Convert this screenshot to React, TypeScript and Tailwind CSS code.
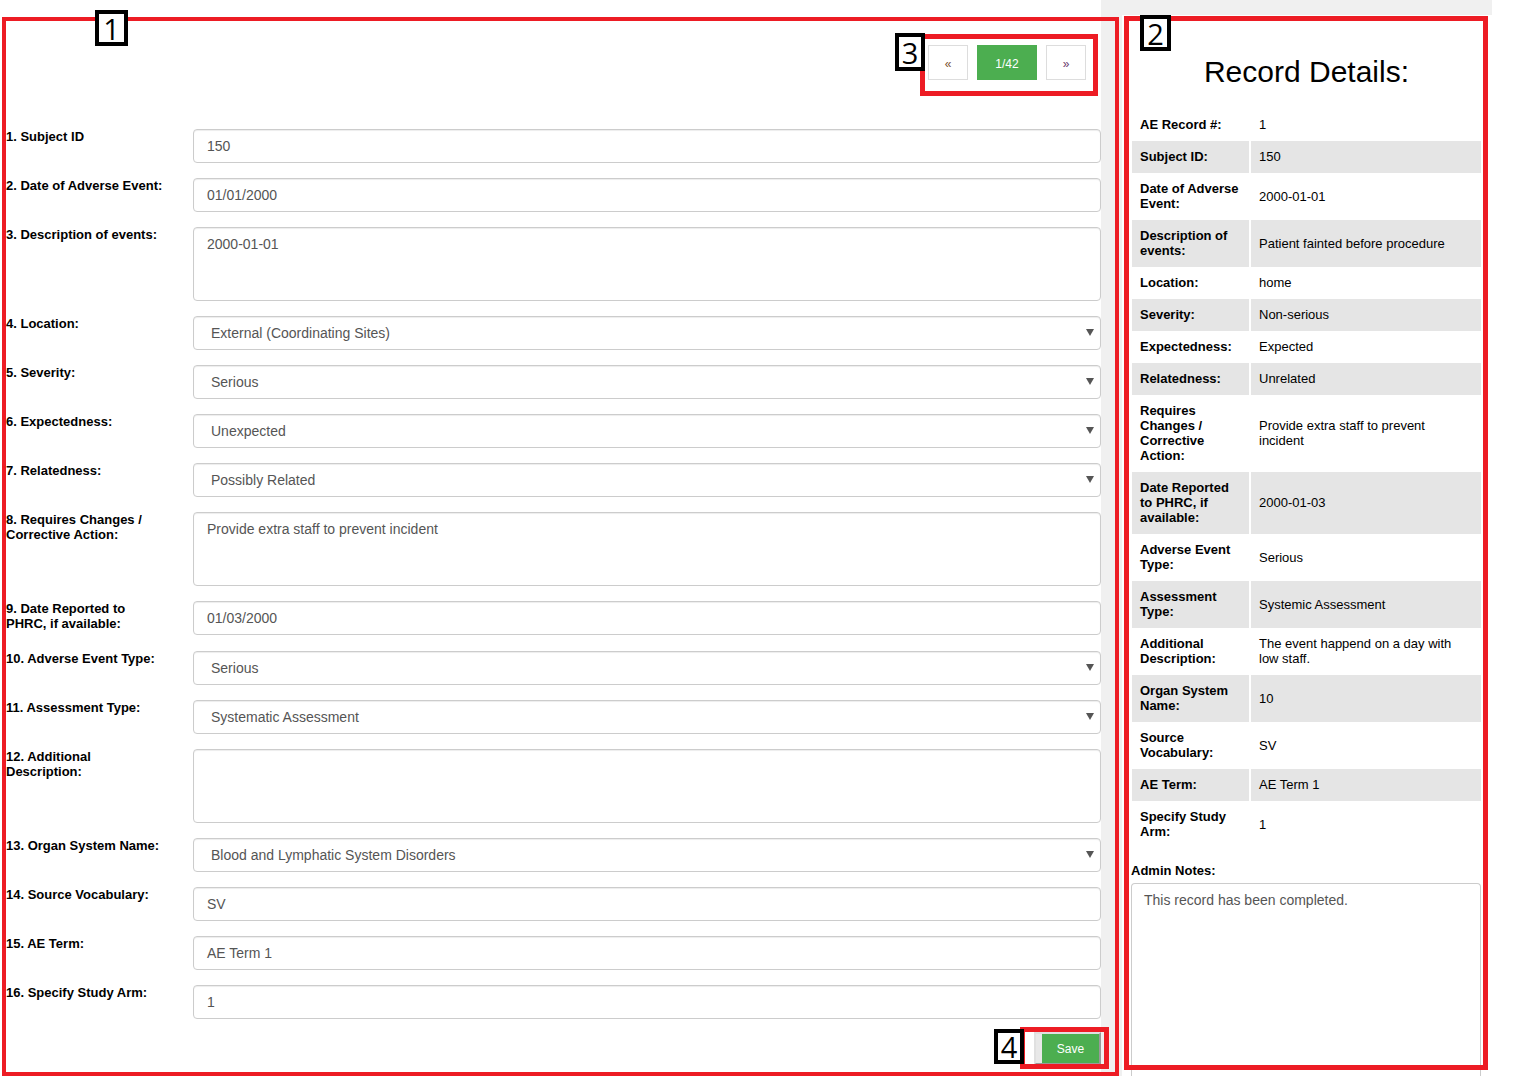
import React from "react";

type Row = { label: string; type: "input" | "select" | "textarea"; value: string };

const formRows: Row[] = [
  { label: "1. Subject ID", type: "input", value: "150" },
  { label: "2. Date of Adverse Event:", type: "input", value: "01/01/2000" },
  { label: "3. Description of events:", type: "textarea", value: "2000-01-01" },
  { label: "4. Location:", type: "select", value: "External (Coordinating Sites)" },
  { label: "5. Severity:", type: "select", value: "Serious" },
  { label: "6. Expectedness:", type: "select", value: "Unexpected" },
  { label: "7. Relatedness:", type: "select", value: "Possibly Related" },
  { label: "8. Requires Changes / Corrective Action:", type: "textarea", value: "Provide extra staff to prevent incident" },
  { label: "9. Date Reported to PHRC, if available:", type: "input", value: "01/03/2000" },
  { label: "10. Adverse Event Type:", type: "select", value: "Serious" },
  { label: "11. Assessment Type:", type: "select", value: "Systematic Assessment" },
  { label: "12. Additional Description:", type: "textarea", value: "" },
  { label: "13. Organ System Name:", type: "select", value: "Blood and Lymphatic System Disorders" },
  { label: "14. Source Vocabulary:", type: "input", value: "SV" },
  { label: "15. AE Term:", type: "input", value: "AE Term 1" },
  { label: "16. Specify Study Arm:", type: "input", value: "1" },
];

const details: { label: React.ReactNode; value: React.ReactNode }[] = [
  { label: "AE Record #:", value: "1" },
  { label: "Subject ID:", value: "150" },
  { label: "Date of Adverse Event:", value: "2000-01-01" },
  { label: "Description of events:", value: "Patient fainted before procedure" },
  { label: "Location:", value: "home" },
  { label: "Severity:", value: "Non-serious" },
  { label: "Expectedness:", value: "Expected" },
  { label: "Relatedness:", value: "Unrelated" },
  {
    label: (
      <>
        Requires
        <br />
        Changes /
        <br />
        Corrective
        <br />
        Action:
      </>
    ),
    value: (
      <>
        Provide extra staff to prevent
        <br />
        incident
      </>
    ),
  },
  {
    label: (
      <>
        Date Reported
        <br />
        to PHRC, if
        <br />
        available:
      </>
    ),
    value: "2000-01-03",
  },
  { label: "Adverse Event Type:", value: "Serious" },
  { label: "Assessment Type:", value: "Systemic Assessment" },
  {
    label: "Additional Description:",
    value: (
      <>
        The event happend on a day with
        <br />
        low staff.
      </>
    ),
  },
  { label: "Organ System Name:", value: "10" },
  { label: "Source Vocabulary:", value: "SV" },
  { label: "AE Term:", value: "AE Term 1" },
  { label: "Specify Study Arm:", value: "1" },
];

function Field({ row }: { row: Row }) {
  if (row.type === "textarea") {
    return (
      <div className="h-[74px] rounded-[4px] border border-[#cccccc] bg-white pl-[13px] pr-3 pt-[6px] text-[14px] leading-[20px] text-[#555555] shadow-[inset_0_1px_1px_rgba(0,0,0,0.075)]">
        {row.value}
      </div>
    );
  }
  if (row.type === "select") {
    return (
      <div className="flex h-[34px] items-center justify-between rounded-[4px] border border-[#cccccc] bg-white pl-[17px] pr-[6px] text-[14px] text-[#555555] shadow-[inset_0_1px_1px_rgba(0,0,0,0.075)]">
        <span>{row.value}</span>
        <svg width="8" height="7" viewBox="0 0 8 7" className="mt-[-2px]">
          <path d="M0 0 H8 L4 7 Z" fill="#555555" />
        </svg>
      </div>
    );
  }
  return (
    <div className="flex h-[34px] items-center rounded-[4px] border border-[#cccccc] bg-white pl-[13px] text-[14px] text-[#555555] shadow-[inset_0_1px_1px_rgba(0,0,0,0.075)]">
      {row.value}
    </div>
  );
}

function Tag({ n, className }: { n: string; className: string }) {
  return (
    <div
      className={`absolute flex items-center justify-center border-[4px] border-black bg-white text-[29px] leading-none text-black ${className}`}
      style={{ fontFamily: '"Open Sans", "Liberation Sans", sans-serif' }}
    >
      {n}
    </div>
  );
}

export default function App() {
  return (
    <div
      className="relative flex min-h-[1076px] w-[1536px] bg-white text-black"
      style={{ fontFamily: '"Liberation Sans", Arial, Helvetica, sans-serif' }}
    >
      {/* Left form column */}
      <div className="w-[1101px] shrink-0 bg-white">
        <div className="flex justify-end gap-[9px] pr-[15px] pt-[45px]">
          <div className="flex h-[35px] w-[40px] items-center justify-center border border-[#dddddd] bg-white pt-[2px] text-[12px] text-[#7a5230]">
            «
          </div>
          <div className="flex h-[35px] w-[60px] items-center justify-center bg-[#4cae50] pt-[2px] text-[12px] text-white">
            1/42
          </div>
          <div className="flex h-[35px] w-[40px] items-center justify-center border border-[#dddddd] bg-white pt-[2px] text-[12px] text-[#6b3a6b]">
            »
          </div>
        </div>

        <div className="mt-[49px] flex flex-col gap-[15px]">
          {formRows.map((r, i) => (
            <div key={r.label} className={`grid grid-cols-[193px_1fr] ${i === 9 ? "mt-[1px]" : ""}`}>
              <div className="pl-[6px] pr-[27px] text-[13px] font-bold leading-[15px]">{r.label}</div>
              <Field row={r} />
            </div>
          ))}
        </div>

        <div className="mt-[13px] flex justify-end">
          <div className="border-2 border-b-[#999999] border-l-[#e0e0e0] border-r-[#999999] border-t-[#e0e0e0] bg-[#e8e8e8] pl-[6px]">
            <div className="flex h-[29px] w-[57px] items-center justify-center bg-[#4cae50] text-[12px] text-white">
              Save
            </div>
          </div>
        </div>
      </div>

      {/* Gutter */}
      <div className="w-[21px] shrink-0 bg-[#f0f0f0]" />

      {/* Right details column */}
      <div className="flex w-[370px] shrink-0 flex-col">
        <div className="h-[15px] bg-[#f0f0f0]" />
        <div className="flex flex-1 flex-col bg-white pl-[10px] pr-[11px]">
          <div className="pt-[40px] text-center text-[30px] leading-[34px] text-black">Record Details:</div>
          <div className="mt-[20px] flex flex-col">
            {details.map((d, i) => (
              <div key={i} className="flex gap-[2px] text-[13px] leading-[15px]">
                <div
                  className={`w-[117px] shrink-0 px-[8px] pb-[9px] pt-[8px] font-bold ${i % 2 === 1 ? "bg-[#e5e5e5]" : "bg-white"}`}
                >
                  {d.label}
                </div>
                <div
                  className={`flex flex-1 items-center px-[8px] pb-[9px] pt-[8px] ${i % 2 === 1 ? "bg-[#e5e5e5]" : "bg-white"}`}
                >
                  <span>{d.value}</span>
                </div>
              </div>
            ))}
          </div>
          <div className="mt-[15px] ml-[-1px] text-[13px] font-bold leading-[15px]">Admin Notes:</div>
          <div className="ml-[-1px] mt-[5px] flex-1 rounded-t-[4px] border border-b-0 border-[#cccccc] pl-[12px] pt-[6px] text-[14px] leading-[20px] text-[#555555]">
            This record has been completed.
          </div>
        </div>
      </div>

      <div className="flex-1 bg-white" />

      {/* Annotation overlays */}
      <div className="pointer-events-none absolute left-[2px] top-[17px] h-[1059px] w-[1117px] border-[4px] border-[#ed1c24]" />
      <div className="pointer-events-none absolute left-[1124px] top-[16px] h-[1054px] w-[364px] border-[5px] border-[#ed1c24]" />
      <div className="pointer-events-none absolute left-[920px] top-[34px] h-[62px] w-[178px] border-[5px] border-[#ed1c24]" />
      <div className="pointer-events-none absolute left-[1020px] top-[1027px] h-[42px] w-[89px] border-[5px] border-[#ed1c24]" />

      <Tag n="1" className="left-[95px] top-[10px] h-[36px] w-[33px]" />
      <Tag n="2" className="left-[1140px] top-[15px] h-[36px] w-[31px]" />
      <Tag n="3" className="left-[895px] top-[33px] h-[38px] w-[30px]" />
      <Tag n="4" className="left-[994px] top-[1029px] h-[35px] w-[30px]" />
    </div>
  );
}
